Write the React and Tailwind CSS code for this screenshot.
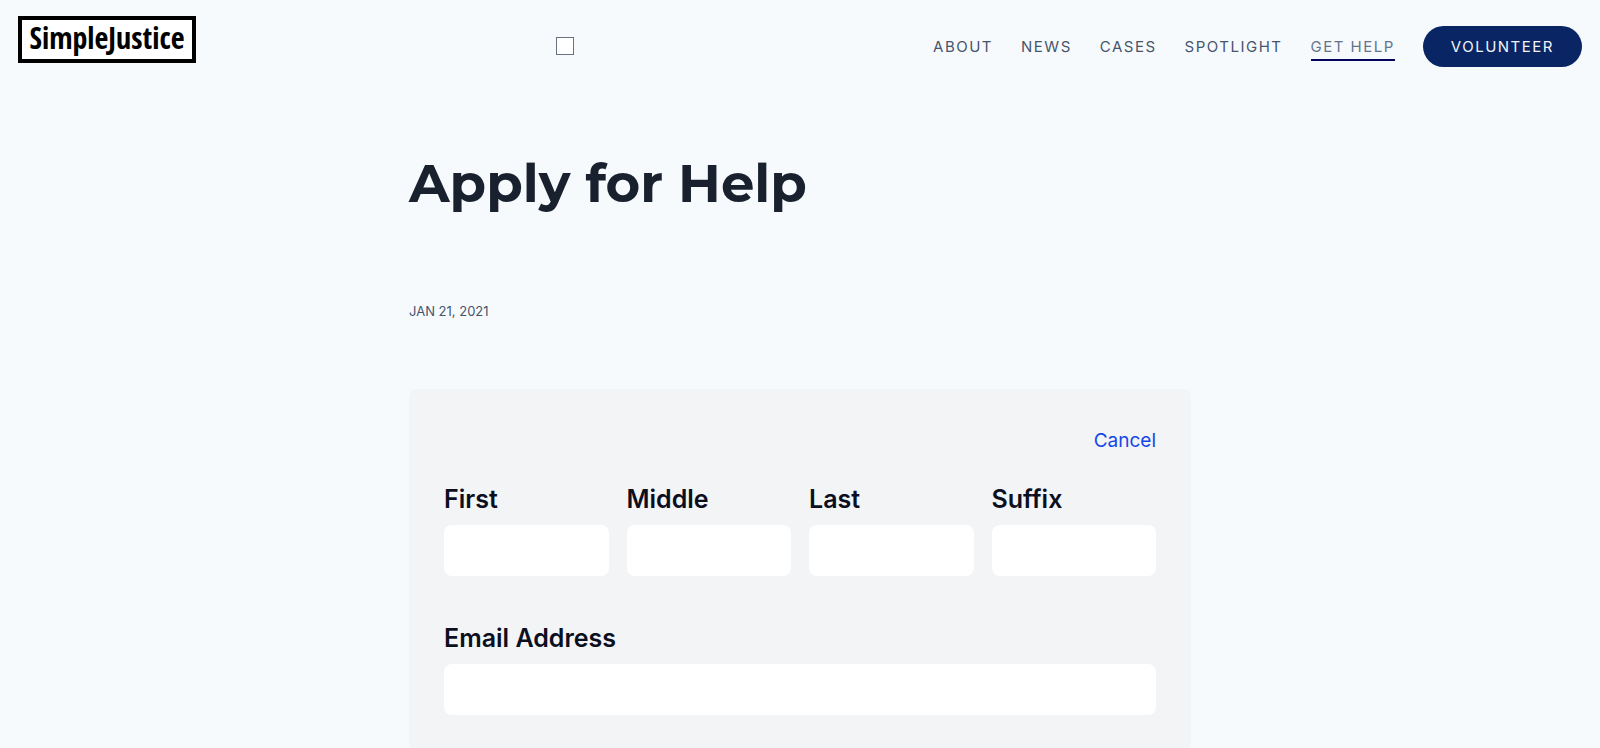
import { useState } from "react"

const links = [
    { label: "About", href: "#about" },
    { label: "News", href: "#news" },
    { label: "Cases", href: "#cases" },
    { label: "Spotlight", href: "#spotlight" },
    { label: "Get Help", href: "#get-help", active: true }
]

const nameFields = [
    { id: "first", label: "First" },
    { id: "middle", label: "Middle" },
    { id: "last", label: "Last" },
    { id: "suffix", label: "Suffix" }
]

const emptyForm = {
    first: "",
    middle: "",
    last: "",
    suffix: "",
    email: ""
}

function Header() {
    const [open, setOpen] = useState(false)

    return (
        <header className="flex items-start justify-between px-[18px] pt-4">
            <a
                href="#home"
                className="flex h-[47px] w-[178px] items-center justify-center border-4 border-black bg-white pb-1 font-['Open_Sans_Condensed','Noto_Sans_Condensed','Fira_Sans_Condensed','Open_Sans',sans-serif] text-[30px] leading-8 font-bold text-black"
            >
                SimpleJustice
            </a>

            {/* Menu toggle */}
            <input
                type="checkbox"
                aria-label="Toggle menu"
                checked={open}
                onChange={e => setOpen(e.target.checked)}
                className="mt-[21px] size-[18px] appearance-none border border-gray-500 bg-white checked:bg-gray-500"
            />

            <nav className="mt-[10px] flex items-center gap-7 text-[15px] leading-6 tracking-widest text-slate-600 uppercase">
                {links.map(link => (
                    <a
                        key={link.label}
                        href={link.href}
                        className={
                            link.active
                                ? "border-y-2 border-t-transparent border-b-[#04045c] text-slate-500"
                                : "border-y-2 border-transparent"
                        }
                    >
                        {link.label}
                    </a>
                ))}
                <a
                    href="#volunteer"
                    className="rounded-full bg-[#0a2563] px-7 py-2 leading-[25px] text-slate-100"
                >
                    Volunteer
                </a>
            </nav>
        </header>
    )
}

function Field({ id, label, type = "text", value, onChange }) {
    return (
        <div className="flex flex-col gap-2">
            <label htmlFor={id} className="text-[25px] leading-9 font-semibold text-[#0b0f1e]">
                {label}
            </label>
            <input
                id={id}
                type={type}
                value={value}
                onChange={e => onChange(id, e.target.value)}
                className="h-[51px] w-full rounded-lg bg-white px-4 text-xl"
            />
        </div>
    )
}

export default function App() {
    const [form, setForm] = useState(emptyForm)

    function change(id, value) {
        setForm({ ...form, [id]: value })
    }

    return (
        <div className="min-h-screen bg-[#f7fafd] font-[Inter,sans-serif]">
            <Header />

            <main className="mx-auto max-w-[782px] pt-[76px]">
                <h1 className="font-[Montserrat,Inter,sans-serif] text-[53px] leading-[80px] font-bold text-[#18212d]">
                    Apply for Help
                </h1>

                <p className="mt-[76px] text-[13px] leading-6 text-slate-600 uppercase">
                    Jan 21, 2021
                </p>

                <form className="mt-[66px] rounded-lg bg-gray-100 px-[35px] pt-9 pb-12">
                    <div className="flex justify-end">
                        <button
                            type="button"
                            className="text-[19px] leading-8 text-blue-700"
                            onClick={() => setForm(emptyForm)}
                        >
                            Cancel
                        </button>
                    </div>

                    <div className="mt-6 grid grid-cols-4 gap-[18px]">
                        {nameFields.map(f => (
                            <Field
                                key={f.id}
                                id={f.id}
                                label={f.label}
                                value={form[f.id]}
                                onChange={change}
                            />
                        ))}
                    </div>

                    <div className="mt-11">
                        <Field
                            id="email"
                            label="Email Address"
                            type="email"
                            value={form.email}
                            onChange={change}
                        />
                    </div>
                </form>
            </main>
        </div>
    )
}
